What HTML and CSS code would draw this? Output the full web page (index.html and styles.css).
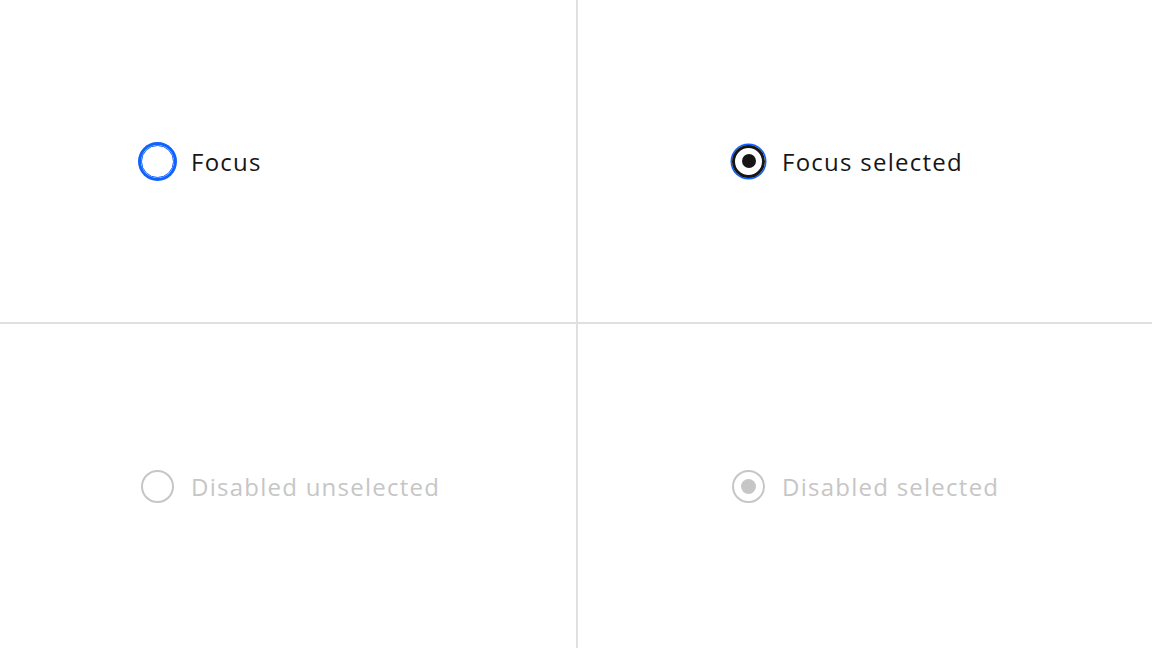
FILE: index.html
```html
<!DOCTYPE html>
<html lang="en">
<head>
    <meta charset="UTF-8">
    <meta name="viewport" content="width=device-width, initial-scale=1.0">
    <title>Radio button states</title>
    <link rel="stylesheet" href="styles.css">
</head>
<body>
    <div class="board">
        <div class="cell cell-left">
            <label class="option">
                <span class="radio radio-focus"></span>
                <span class="label">Focus</span>
            </label>
        </div>
        <div class="cell cell-right">
            <label class="option">
                <span class="radio radio-focus-selected"></span>
                <span class="label">Focus selected</span>
            </label>
        </div>
        <div class="cell cell-left">
            <label class="option disabled">
                <span class="radio radio-disabled"></span>
                <span class="label">Disabled unselected</span>
            </label>
        </div>
        <div class="cell cell-right">
            <label class="option disabled">
                <span class="radio radio-disabled-selected"></span>
                <span class="label">Disabled selected</span>
            </label>
        </div>
    </div>
</body>
</html>
```

FILE: styles.css
```css
:root {
    --text: #161616;
    --disabled: #c6c6c6;
    --focus: #0f62fe;
    --divider: #e0e0e0;
}

body {
    margin: 0;
    font-family: 'Open Sans', 'Noto Sans', sans-serif;
    background: #fff;
    color: var(--text);
}

.board {
    display: grid;
    grid-template-columns: 578px 574px;
    grid-template-rows: 324px 324px;
    width: 1152px;
    height: 648px;
}

.cell {
    display: flex;
    align-items: center;
}

.cell-left {
    padding-left: 141px;
    border-right: 2px solid var(--divider);
}

.cell-right {
    padding-left: 154px;
}

.cell:nth-child(-n+2) {
    border-bottom: 2px solid var(--divider);
}

.option {
    display: flex;
    align-items: center;
    gap: 17px;
    font-size: 24px;
    letter-spacing: 1.25px;
}

.option.disabled {
    color: var(--disabled);
}

.radio {
    box-sizing: border-box;
    width: 33px;
    height: 33px;
    border-radius: 50%;
    border: 2px solid var(--text);
    display: flex;
    align-items: center;
    justify-content: center;
    flex-shrink: 0;
}

.radio-focus {
    border: 1px solid var(--focus);
    box-shadow: 0 0 0 3px var(--focus);
}

.radio-focus-selected {
    border: 3px solid var(--text);
    box-shadow: 0 0 0 1.5px var(--focus);
}

.radio-focus-selected::after,
.radio-disabled-selected::after {
    content: "";
    width: 14px;
    height: 14px;
    border-radius: 50%;
    background: var(--text);
}

.radio-disabled,
.radio-disabled-selected {
    border-color: var(--disabled);
}

.radio-disabled-selected::after {
    width: 15px;
    height: 15px;
    background: var(--disabled);
}
```
